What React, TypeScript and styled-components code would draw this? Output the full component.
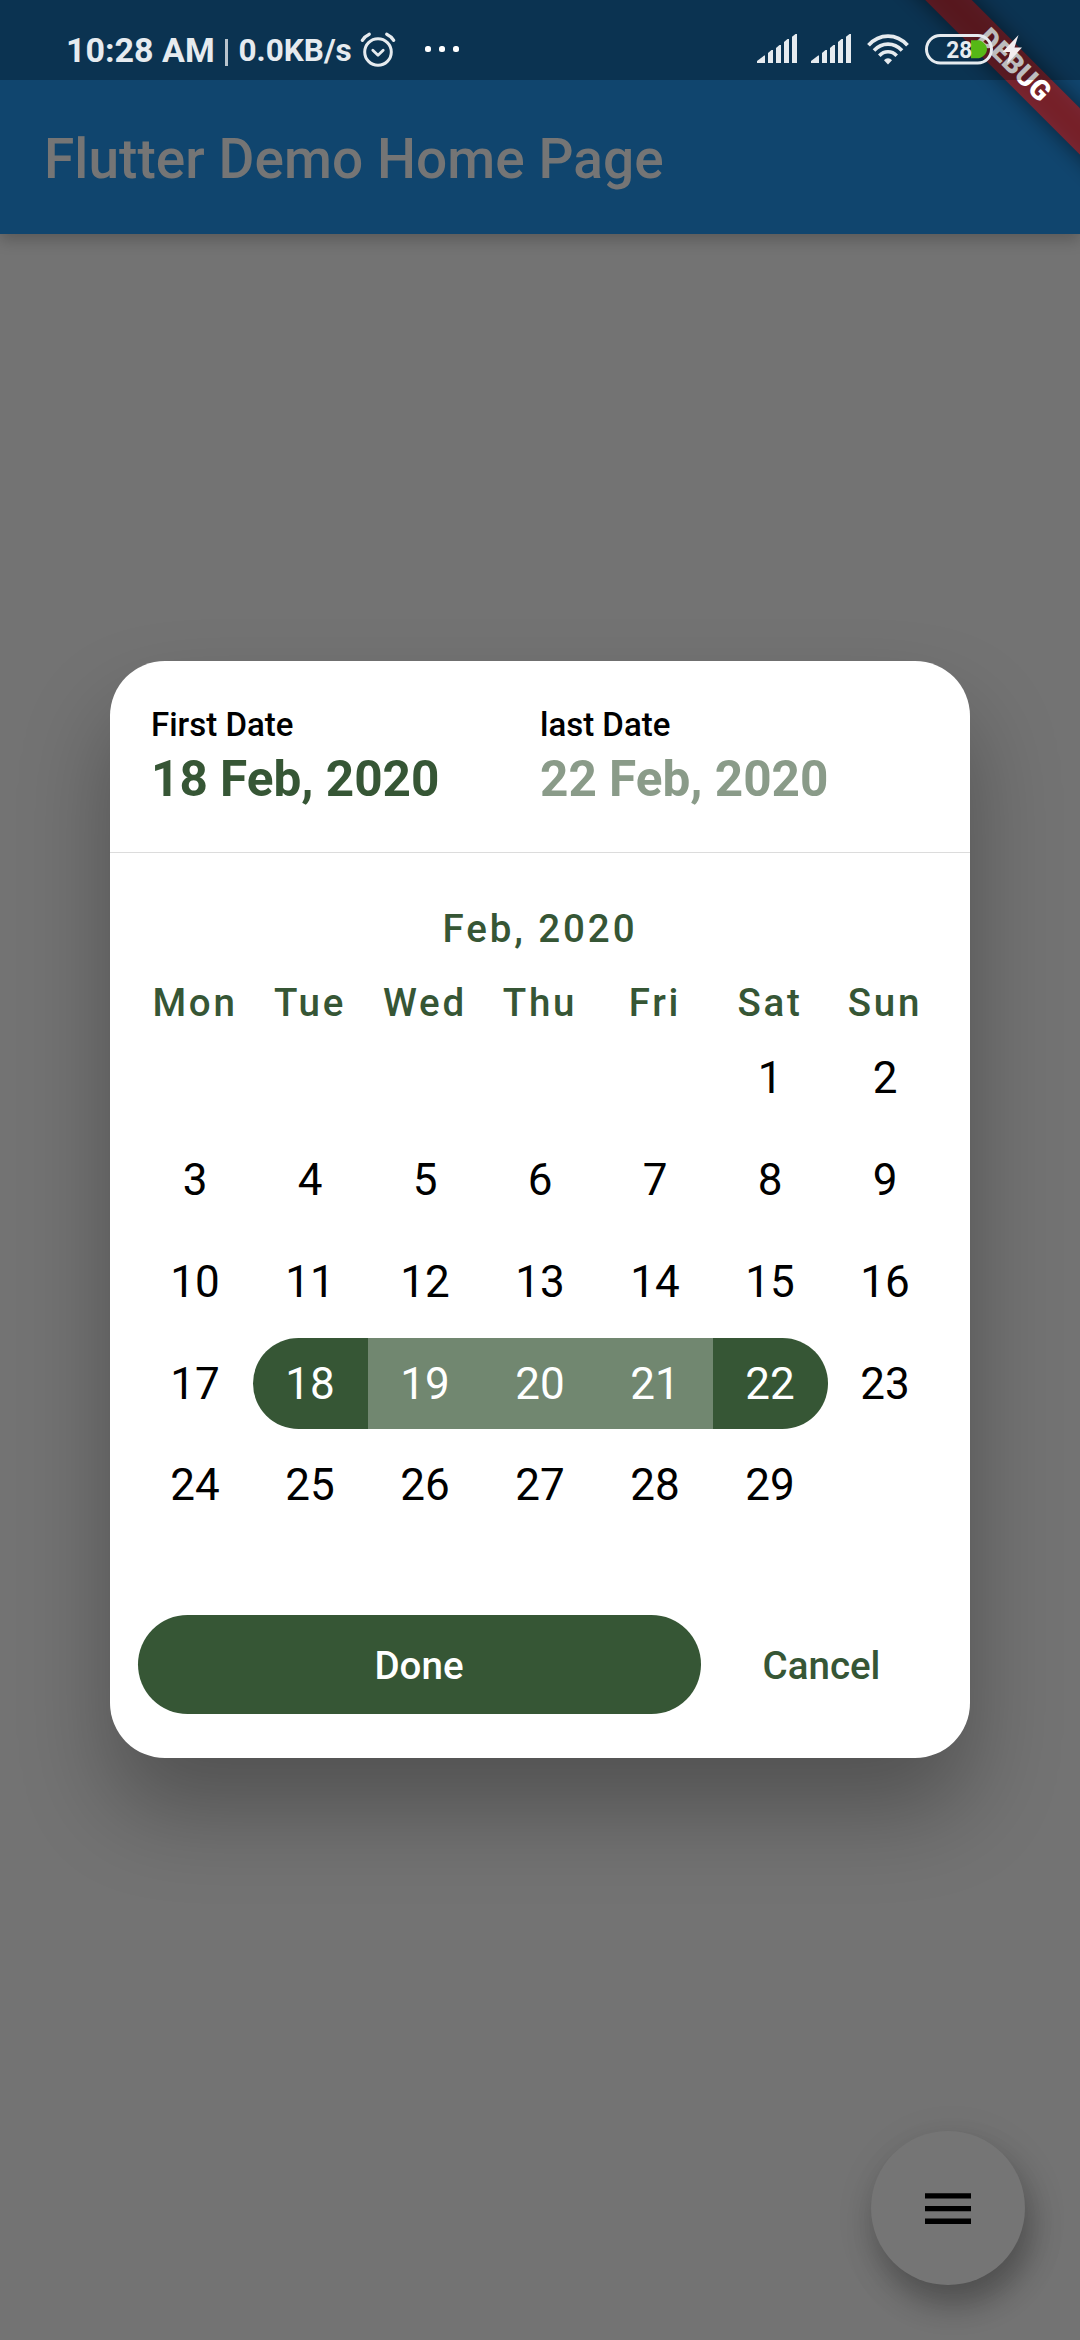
import React from "react";
import styled, { createGlobalStyle } from "styled-components";

const GREEN = "#365635";

const GlobalStyle = createGlobalStyle`
  * { box-sizing: border-box; }
  html, body { margin: 0; padding: 0; background: #737373; }
  body { font-family: Roboto, "Noto Sans", sans-serif; overflow: hidden; }
`;

const Screen = styled.div`
  position: relative;
  width: 1080px;
  height: 2340px;
  overflow: hidden;
  background: #737373;
  display: flex;
  flex-direction: column;
`;

const Header = styled.header`
  position: relative;
  flex: none;
  height: 234px;
  background: #10456e;
  box-shadow: 0 6px 14px rgba(0, 0, 0, 0.22);
`;

const StatusBar = styled.div`
  position: relative;
  z-index: 2;
  height: 80px;
  padding: 20px 57px 0 66px;
  background: rgba(0, 0, 0, 0.26);
  display: flex;
  align-items: flex-start;
  justify-content: space-between;
  color: #e6ebef;
`;

const StatusGroup = styled.div`
  display: flex;
  align-items: center;
  height: 60px;
`;

const Clock = styled.span`
  font-size: 34px;
  font-weight: 700;
  line-height: 60px;
  white-space: pre;
  width: 149px;
`;

const Speed = styled.span`
  font-size: 31.5px;
  font-weight: 700;
  line-height: 60px;
  white-space: pre;
  margin: 2px 8px 0 0;
`;

const Bar = styled.i`
  width: 3px;
  height: 27px;
  margin: 5px 10.5px 0 10px;
  background: #b9c4cd;
`;

const Toolbar = styled.div`
  height: 154px;
  padding-left: 44px;
  display: flex;
  align-items: center;
`;

const Title = styled.h1`
  margin: 4px 0 0;
  font-size: 55px;
  font-weight: 500;
  line-height: 64px;
  letter-spacing: 0.05px;
  color: #757575;
`;

const Ribbon = styled.div`
  position: absolute;
  z-index: 1;
  left: 844.25px;
  top: 49.25px;
  width: 340px;
  height: 33px;
  transform: rotate(45deg);
  &::before {
    content: "";
    position: absolute;
    inset: 0;
    background: rgba(0, 0, 0, 0.5);
    filter: blur(11px);
  }
`;

const RibbonText = styled.div`
  position: relative;
  height: 33px;
  background: rgba(183, 28, 28, 0.627);
  color: #fff;
  font-size: 28px;
  font-weight: 900;
  line-height: 31px;
  text-align: center;
`;

const Content = styled.main`
  flex: 1;
  display: flex;
  flex-direction: column;
  align-items: center;
  padding-top: 427.3px;
`;

const Dialog = styled.section`
  width: 860px;
  height: 1097.2px;
  border-radius: 55px;
  background: #fff;
  display: flex;
  flex-direction: column;
  box-shadow: 0 52px 90px rgba(0, 0, 0, 0.29);
`;

const Dates = styled.div`
  height: 192px;
  padding: 44px 41px 0;
  display: grid;
  grid-template-columns: 1fr 1fr;
  border-bottom: 1.5px solid #dcdcdc;
`;

const DateLabel = styled.div`
  font-size: 33px;
  font-weight: 500;
  line-height: 39px;
  color: #000;
`;

const DateValue = styled.div<{ $faded?: boolean }>`
  font-size: 49.5px;
  font-weight: 700;
  line-height: 58px;
  margin-top: 6px;
  color: ${(p) => (p.$faded ? "#8a9b89" : GREEN)};
`;

const Month = styled.div`
  margin-top: 53px;
  height: 45px;
  line-height: 45px;
  text-align: center;
  font-size: 38.5px;
  font-weight: 500;
  letter-spacing: 2.9px;
  color: ${GREEN};
`;

const Week = styled.div`
  margin: 29px 27.5px 0;
  display: grid;
  grid-template-columns: repeat(7, 115px);
`;

const Weekday = styled.div`
  height: 44px;
  line-height: 45px;
  text-align: center;
  font-size: 38.5px;
  font-weight: 500;
  letter-spacing: 2.75px;
  color: ${GREEN};
`;

const Days = styled.div`
  margin: 8px 27.5px 0;
  display: grid;
  grid-template-columns: repeat(7, 115px);
  grid-auto-rows: 91px;
  row-gap: 10.75px;
`;

type Kind = "plain" | "start" | "middle" | "end";

const Day = styled.div<{ $kind: Kind }>`
  line-height: 92px;
  text-align: center;
  font-size: 44px;
  color: ${(p) => (p.$kind === "plain" ? "#000" : "#fff")};
  background: ${(p) =>
    p.$kind === "plain" ? "transparent" : p.$kind === "middle" ? "#718770" : GREEN};
  border-radius: ${(p) =>
    p.$kind === "start" ? "45.5px 0 0 45.5px" : p.$kind === "end" ? "0 45.5px 45.5px 0" : "0"};
`;

const Actions = styled.div`
  margin-top: auto;
  padding: 0 27.5px 44px;
  display: flex;
`;

const Button = styled.button<{ $primary?: boolean }>`
  width: ${(p) => (p.$primary ? "563px" : "242px")};
  height: 99px;
  padding: 2px 0 0;
  border: 0;
  border-radius: 50px;
  background: ${(p) => (p.$primary ? GREEN : "transparent")};
  color: ${(p) => (p.$primary ? "#fff" : GREEN)};
  font: 500 38.5px/97px Roboto, sans-serif;
`;

const Fab = styled.button`
  position: absolute;
  right: 55px;
  bottom: 55px;
  width: 154px;
  height: 154px;
  border: 0;
  padding: 0;
  border-radius: 50%;
  background: #757575;
  display: grid;
  place-items: center;
  box-shadow: 6px 20px 30px rgba(0, 0, 0, 0.25), 4px 10px 44px rgba(0, 0, 0, 0.1);
`;

const AlarmSvg = styled.svg`
  margin-top: 1px;
`;

const AlarmIcon = () => (
  <AlarmSvg width="36" height="37" viewBox="0 0 36 37" fill="none" stroke="#e6ebef" strokeLinecap="round" strokeLinejoin="round">
    <circle cx="18" cy="20" r="13.3" strokeWidth="3" />
    <path d="M12.8 18.2l5.200 5 5.200-5" strokeWidth="2.8" />
    <path d="M2.300 8.400c1.500-2.600 4-4.800 7-6.200M33.700 8.400c-1.500-2.600-4-4.800-7-6.200" strokeWidth="3.200" />
  </AlarmSvg>
);

const Dots = styled.div`
  display: flex;
  gap: 8.6px;
  margin: 0 0 2px 29.5px;
  i {
    width: 5.5px;
    height: 6px;
    border-radius: 2.5px;
    background: #fff;
  }
`;

const SignalIcon = () => (
  <svg width="40" height="30" viewBox="0 0 40 30" fill="#e6ebef">
    <path d="M0 29v-2l7.200-5.500h.8v7.500z" />
    <path d="M11 29V19l3.500-3h1.500v13z" />
    <path d="M19 29V14l3.500-3H24v18z" />
    <path d="M27 29V8l3.500-3H32v24z" />
    <path d="M35 29V2.800L38.500 0H40v29z" />
  </svg>
);

const WifiIcon = () => (
  <svg width="42" height="31" viewBox="0 0 42 31" fill="none" stroke="#e6ebef">
    <path d="M1.500 11.200C12.500-1 29.500-1 40.500 11.200" strokeWidth="3.800" />
    <path d="M7 16.500C15 8 27 8 35 16.500" strokeWidth="3.600" />
    <path d="M12.300 21.700C17.300 16.500 24.700 16.500 29.700 21.700" strokeWidth="3.600" />
    <path d="M17 26.300c2-2.800 6-2.800 8 0L21 30.500z" fill="#e6ebef" stroke="none" />
  </svg>
);

const BatteryIcon = () => (
  <svg width="98" height="32" viewBox="0 0 98 32">
    <path d="M46 6.300h8c4 1.300 8 4.700 8 9s-4 7.700-8 9h-8z" fill="#56b816" />
    <rect x="1.500" y="1.500" width="65" height="27.500" rx="13.700" fill="none" stroke="#e6ebef" strokeWidth="3" />
    <text x="34.300" y="23.800" textAnchor="middle" fontFamily="Roboto" fontWeight="700" fontSize="24.500" textLength="26" lengthAdjust="spacingAndGlyphs" fill="#e6ebef">28</text>
    <path d="M93.500 1L77.500 18h7.500l-3 12L97 13.500h-7.500z" fill="#f3edef" />
  </svg>
);

const RightIcons = styled(StatusGroup)`
  align-items: flex-start;
  padding-top: 14px;
  svg + svg { margin-left: 14px; }
  svg:nth-child(3), svg:nth-child(4) { margin-left: 16px; }
`;

const WEEKDAYS = ["Mon", "Tue", "Wed", "Thu", "Fri", "Sat", "Sun"];
const FIRST_OFFSET = 5;
const DAY_COUNT = 29;
const START = 18;
const END = 22;

const kindOf = (d: number): Kind =>
  d === START ? "start" : d === END ? "end" : d > START && d < END ? "middle" : "plain";

export default function App() {
  return (
    <Screen>
      <GlobalStyle />
      <Header>
        <StatusBar>
          <StatusGroup>
            <Clock>10:28 AM</Clock>
            <Bar />
            <Speed>0.0KB/s</Speed>
            <AlarmIcon />
            <Dots>
              <i />
              <i />
              <i />
            </Dots>
          </StatusGroup>
          <RightIcons>
            <SignalIcon />
            <SignalIcon />
            <WifiIcon />
            <BatteryIcon />
          </RightIcons>
        </StatusBar>
        <Toolbar>
          <Title>Flutter Demo Home Page</Title>
        </Toolbar>
        <Ribbon>
          <RibbonText>DEBUG</RibbonText>
        </Ribbon>
      </Header>
      <Content>
        <Dialog>
          <Dates>
            <div>
              <DateLabel>First Date</DateLabel>
              <DateValue>18 Feb, 2020</DateValue>
            </div>
            <div>
              <DateLabel>last Date</DateLabel>
              <DateValue $faded>22 Feb, 2020</DateValue>
            </div>
          </Dates>
          <Month>Feb, 2020</Month>
          <Week>
            {WEEKDAYS.map((name) => (
              <Weekday key={name}>{name}</Weekday>
            ))}
          </Week>
          <Days>
            {Array.from({ length: FIRST_OFFSET }, (_, i) => (
              <span key={`blank-${i}`} />
            ))}
            {Array.from({ length: DAY_COUNT }, (_, i) => (
              <Day key={i} $kind={kindOf(i + 1)}>
                {i + 1}
              </Day>
            ))}
          </Days>
          <Actions>
            <Button $primary>Done</Button>
            <Button>Cancel</Button>
          </Actions>
        </Dialog>
      </Content>
      <Fab aria-label="Menu">
        <svg width="46" height="31" viewBox="0 0 46 31">
          <path d="M0 .200h46v5.300H0zM0 12.900h46v5.300H0zM0 25.600h46v5.300H0z" />
        </svg>
      </Fab>
    </Screen>
  );
}
